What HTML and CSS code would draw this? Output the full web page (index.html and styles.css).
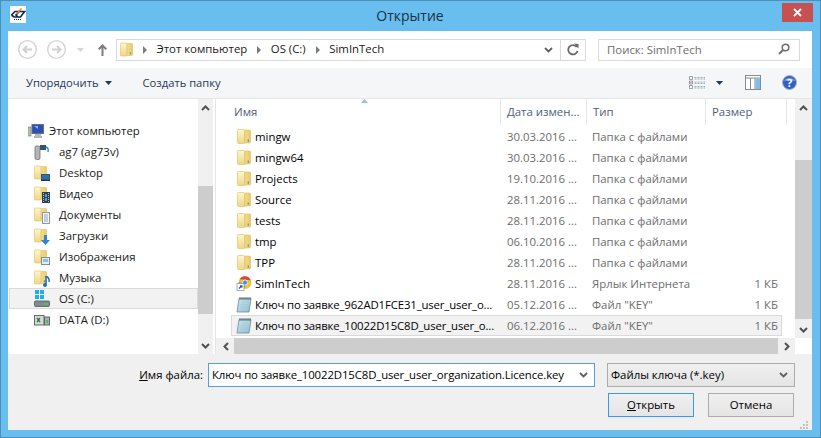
FILE: index.html
```html
<!DOCTYPE html>
<html lang="ru">
<head>
<meta charset="utf-8">
<title>Открытие</title>
<link rel="stylesheet" href="styles.css">
</head>
<body>
<svg class="defs" width="0" height="0" aria-hidden="true">
  <defs>
    <linearGradient id="fy" x1="0" y1="0" x2="0" y2="1"><stop offset="0" stop-color="#fdf6cf"/><stop offset="1" stop-color="#f0d685"/></linearGradient>
    <linearGradient id="fz" x1="0" y1="0" x2="1" y2="0"><stop offset="0" stop-color="#f5dc8c"/><stop offset="1" stop-color="#eac963"/></linearGradient>
    <linearGradient id="nt" x1="0" y1="0" x2="1" y2="1"><stop offset="0" stop-color="#cfe8f1"/><stop offset="1" stop-color="#8dbcd0"/></linearGradient>
    <symbol id="folder" viewBox="0 0 14 15">
      <path d="M0.500 1.500 Q0.500 .5 1.500 .5 H6.500 Q7.500 .5 7.500 1.500 V14.500 H1.500 Q.5 14.500 .5 13.500Z" fill="url(#fy)" stroke="#e0c468" stroke-width=".7"/>
      <path d="M8 1 H12.500 Q13.500 1 13.500 2 V13 Q13.500 14 12.500 14 H8Z" fill="url(#fz)" stroke="#dcbc5c" stroke-width=".6"/>
      <rect x="10.600" y="10.500" width="1.400" height="2.200" fill="#4f9ed8"/>
    </symbol>
    <symbol id="note" viewBox="0 0 16 17">
      <path d="M3 2.500 H15 L13 16 H1Z" fill="url(#nt)" stroke="#6d8d9c" stroke-width=".8"/>
      <path d="M5 6H13M4.600 8.500H12.600M4.300 11H12.300M4 13.500H12" stroke="#a5cbd9" stroke-width=".8"/>
      <path d="M4 1V4M6 1V4M8 1V4M10 1V4M12 1V4M14 1V4" stroke="#56646c" stroke-width=".9"/>
    </symbol>
  </defs>
</svg>
<div class="window">
  <header class="titlebar">
    <div class="title-left">
      <svg class="app-icon" viewBox="0 0 16 17" width="16" height="17">
        <rect width="16" height="17" fill="#fff"/>
        <path d="M1.500 9 L5 5.500 H9 L6 9 L8 11 M7 5.500 H14.500 L10.500 11 H4 L1.500 9" fill="none" stroke="#1b2a52" stroke-width="1.700"/>
        <path d="M6.500 8 L11.500 2.500" stroke="#e98a17" stroke-width="1.500"/>
        <path d="M4 13.500 H11" stroke="#1b2a52" stroke-width="1" stroke-dasharray="1 1"/>
      </svg>
    </div>
    <div class="title-text">Открытие</div>
    <div class="title-right">
      <div class="close">
        <svg viewBox="0 0 9 9" width="9" height="9"><path d="M1 1L8 8M8 1L1 8" stroke="#fff" stroke-width="1.800"/></svg>
      </div>
    </div>
  </header>

  <div class="content">
    <div class="addressrow">
      <svg class="nav-btn" viewBox="0 0 19 19" width="19" height="19"><circle cx="9.500" cy="9.500" r="8.800" fill="#fff" stroke="#d2d2d2" stroke-width="1.300"/><path d="M14 9.500H6M9 6L5.500 9.500L9 13" fill="none" stroke="#d0d0d0" stroke-width="2"/></svg>
      <svg class="nav-btn fwd" viewBox="0 0 19 19" width="19" height="19"><circle cx="9.500" cy="9.500" r="8.800" fill="#fff" stroke="#d2d2d2" stroke-width="1.300"/><path d="M5 9.500H13M10 6L13.500 9.500L10 13" fill="none" stroke="#d0d0d0" stroke-width="2"/></svg>
      <svg class="hist" viewBox="0 0 7 4" width="7" height="4"><path d="M0 0H7L3.500 4Z" fill="#d6d6d6"/></svg>
      <svg class="up" viewBox="0 0 9 12" width="9" height="12"><path d="M4.500 12V1.500M.7 5.300L4.500 1.500L8.300 5.300" fill="none" stroke="#7e7e7e" stroke-width="2"/></svg>
      <div class="addressbar">
        <svg class="crumb-folder" width="13" height="17"><use href="#folder"/></svg>
        <span class="sep"></span><span class="crumb">Этот компьютер</span>
        <span class="sep"></span><span class="crumb">OS (C:)</span>
        <span class="sep"></span><span class="crumb">SimInTech</span>
        <span class="grow"></span>
        <svg class="addr-drop" viewBox="0 0 9 6" width="9" height="6"><path d="M1 1L4.500 4.500L8 1" fill="none" stroke="#5f5f5f" stroke-width="1.800"/></svg>
        <span class="refresh">
          <svg viewBox="0 0 12 13" width="12" height="13"><path d="M9.800 4A4.700 4.700 0 1 0 10.500 8" fill="none" stroke="#6b6b6b" stroke-width="1.800"/><path d="M7 .5L11.500 1V5.500Z" fill="#6b6b6b"/></svg>
        </span>
      </div>
      <div class="searchbox">
        <span class="grow">Поиск: SimInTech</span>
        <svg viewBox="0 0 12 12" width="12" height="12"><circle cx="7.500" cy="4.500" r="3.300" fill="none" stroke="#6f6f6f" stroke-width="1.600"/><path d="M5 7L1 11" stroke="#6f6f6f" stroke-width="2"/></svg>
      </div>
    </div>

    <div class="toolbar">
      <span class="tool">Упорядочить</span>
      <svg class="caret" viewBox="0 0 7 4" width="7" height="4"><path d="M0 0H7L3.500 4Z" fill="#1e395b"/></svg>
      <span class="tool create">Создать папку</span>
      <span class="grow"></span>
      <svg class="view-ic" viewBox="0 0 16 13" width="16" height="13">
        <path d="M.5 .5h3v3h-3zM.5 5h3v3h-3zM.5 9.500h3v3h-3z" fill="#fff" stroke="#7d8a9a" stroke-width=".8"/>
        <rect x="1.500" y="5.800" width="1" height="1.500" fill="#d84a3a"/>
        <path d="M5.500 1.500H16M5.500 3H16M5.500 6H16M5.500 7.500H16M5.500 10.500H16M5.500 12H16" stroke="#8b97a6" stroke-width=".8" stroke-dasharray="2 1"/>
      </svg>
      <svg class="view-caret" viewBox="0 0 7 4" width="7" height="4"><path d="M0 0H7L3.500 4Z" fill="#1e395b"/></svg>
      <svg class="pane-ic" viewBox="0 0 16 15" width="16" height="15">
        <rect x=".5" y=".5" width="15" height="14" fill="#fff" stroke="#8a8a8a"/>
        <path d="M.5 3H15.500M5.500 3V14.500M10 3V14.500" stroke="#8a8a8a"/>
        <rect x="10.500" y="3.500" width="4.500" height="10.500" fill="#7dbdf2"/>
      </svg>
      <svg class="help-ic" viewBox="0 0 15 15" width="15" height="15">
        <circle cx="7.500" cy="7.500" r="7" fill="#2f62c0" stroke="#a9b3c4"/>
        <path d="M2 6A6 5 0 0 1 13 6Q7.500 4.500 2 6Z" fill="#7ea7e8"/>
        <text class="help-q" x="7.500" y="11.500" text-anchor="middle">?</text>
      </svg>
    </div>

    <div class="panes">
      <nav class="navpane">
        <div class="navlist">
          <div class="nav-item top">
            <svg class="ni" viewBox="0 0 16 14" width="16" height="14"><rect x="0" y="3" width="3" height="9" fill="#b9c3b4" stroke="#6f7a6f" stroke-width=".6"/><rect x="4" y="0.500" width="11.500" height="9" fill="#2b4fb8" stroke="#6b6f7b"/><path d="M6 2H10V5Z" fill="#8fb0ee"/><path d="M7 11H13M6 13H14" stroke="#9aa0a6" stroke-width="1.400"/></svg>
            <span>Этот компьютер</span>
          </div>
          <div class="nav-item">
            <svg class="ni" viewBox="0 0 16 16" width="16" height="16"><rect x="1" y="2" width="5" height="13.500" rx="1.500" fill="#b5b5b5" stroke="#6f6f6f" stroke-width=".8"/><rect x="6" y="1" width="6" height="5" fill="#32566f"/><path d="M12 3Q15 4 14 8" fill="none" stroke="#2b8ad8" stroke-width="1.400"/></svg>
            <span>ag7 (ag73v)</span>
          </div>
          <div class="nav-item">
            <span class="ni-wrap"><svg width="13" height="15"><use href="#folder"/></svg><svg class="ov" viewBox="0 0 9 7" width="9" height="7"><rect width="9" height="6" fill="#2f6fa8" stroke="#24384d" stroke-width=".7"/><rect y="6" width="9" height="1" fill="#24384d"/></svg></span>
            <span>Desktop</span>
          </div>
          <div class="nav-item">
            <span class="ni-wrap"><svg width="13" height="15"><use href="#folder"/></svg><svg class="ov tall" viewBox="0 0 8 11" width="8" height="11"><rect width="8" height="11" fill="#2a3f4f"/><path d="M1.500 1v9M6.500 1v9" stroke="#a9c7da" stroke-dasharray="1 1"/><rect x="3" y="2" width="2" height="3" fill="#5aa0d2"/><rect x="3" y="6" width="2" height="3" fill="#5aa0d2"/></svg></span>
            <span>Видео</span>
          </div>
          <div class="nav-item">
            <span class="ni-wrap"><svg width="13" height="15"><use href="#folder"/></svg><svg class="ov tall" viewBox="0 0 8 12" width="8" height="12"><rect x=".5" y=".5" width="7" height="11" fill="#f4f6f8" stroke="#8d98a3"/><path d="M2 3H6M2 5H6M2 7H6M2 9H6" stroke="#7d93a8" stroke-width=".8"/></svg></span>
            <span>Документы</span>
          </div>
          <div class="nav-item">
            <span class="ni-wrap"><svg width="13" height="15"><use href="#folder"/></svg><svg class="ov tall" viewBox="0 0 9 10" width="9" height="10"><path d="M3 0H6V5H9L4.500 10L0 5H3Z" fill="#2f86d8"/></svg></span>
            <span>Загрузки</span>
          </div>
          <div class="nav-item">
            <span class="ni-wrap"><svg width="13" height="15"><use href="#folder"/></svg><svg class="ov" viewBox="0 0 9 8" width="9" height="8"><rect x=".5" y=".5" width="8" height="7" fill="#dfeef2" stroke="#7b8f98"/><rect x="2" y="2" width="5" height="3" fill="#8fc2d8"/></svg></span>
            <span>Изображения</span>
          </div>
          <div class="nav-item">
            <span class="ni-wrap"><svg width="13" height="15"><use href="#folder"/></svg><svg class="ov tall" viewBox="0 0 7 11" width="7" height="11"><path d="M3 0V8.500" stroke="#1f6fc0" stroke-width="1.500"/><circle cx="2" cy="9" r="2" fill="#1f6fc0"/><path d="M3 0Q7 2 6 6" fill="none" stroke="#1f6fc0" stroke-width="1.500"/></svg></span>
            <span>Музыка</span>
          </div>
          <div class="nav-item selected">
            <svg class="ni drive" viewBox="0 0 16 17" width="16" height="17"><path d="M1 0h4v4H1zM6 0h4v4H6zM1 5h4v4H1zM6 5h4v4H6z" fill="#1faef0"/><rect x=".5" y="11" width="15" height="5.500" rx="1" fill="#7f8c8f" stroke="#4e585c" stroke-width=".8"/><rect x="10" y="13" width="4" height="2" fill="#4fbf4f"/></svg>
            <span>OS (C:)</span>
          </div>
          <div class="nav-item">
            <svg class="ni drive" viewBox="0 0 16 12" width="16" height="12"><rect x=".5" y="1.500" width="9.500" height="9.500" fill="#d4dadb" stroke="#636b6e"/><path d="M3 4L6 8M6 4L3 8" stroke="#397a3c" stroke-width="1.400"/><rect x="10.500" y="3" width="5" height="8" fill="#aab2b5" stroke="#5d6669"/><rect x="12" y="6" width="2" height="3" fill="#4fbf4f"/></svg>
            <span>DATA (D:)</span>
          </div>
          <div class="nav-item top network">
            <svg class="ni" viewBox="0 0 16 14" width="16" height="14"><circle cx="8" cy="4" r="3" fill="#5b9bd8"/></svg>
          </div>
        </div>
        <div class="vscroll">
          <div class="sb-btn"><svg viewBox="0 0 9 6" width="9" height="6"><path d="M1 5L4.500 1.500L8 5" fill="none" stroke="#505050" stroke-width="2"/></svg></div>
          <div class="sb-track nav-track"><div class="sb-thumb"></div></div>
          <div class="sb-btn"><svg viewBox="0 0 9 6" width="9" height="6"><path d="M1 1L4.500 4.500L8 1" fill="none" stroke="#505050" stroke-width="2"/></svg></div>
        </div>
      </nav>

      <div class="splitter"></div>

      <section class="filepane">
        <div class="filemain">
          <div class="headers">
            <div class="hcol h-name">Имя
              <svg class="sortmark" viewBox="0 0 7 4" width="7" height="4"><path d="M0 4L3.500 0L7 4Z" fill="#9fc0d8"/></svg>
            </div>
            <div class="hcol h-date">Дата измен...</div>
            <div class="hcol h-type">Тип</div>
            <div class="hcol h-size">Размер</div>
          </div>
          <div class="rows">
            <div class="row"><svg class="ri" width="13" height="15"><use href="#folder"/></svg><span class="c-name">mingw</span><span class="c-date">30.03.2016 ...</span><span class="c-type">Папка с файлами</span><span class="c-size"></span></div>
            <div class="row"><svg class="ri" width="13" height="15"><use href="#folder"/></svg><span class="c-name">mingw64</span><span class="c-date">30.03.2016 ...</span><span class="c-type">Папка с файлами</span><span class="c-size"></span></div>
            <div class="row"><svg class="ri" width="13" height="15"><use href="#folder"/></svg><span class="c-name">Projects</span><span class="c-date">19.10.2016 ...</span><span class="c-type">Папка с файлами</span><span class="c-size"></span></div>
            <div class="row"><svg class="ri" width="13" height="15"><use href="#folder"/></svg><span class="c-name">Source</span><span class="c-date">28.11.2016 ...</span><span class="c-type">Папка с файлами</span><span class="c-size"></span></div>
            <div class="row"><svg class="ri" width="13" height="15"><use href="#folder"/></svg><span class="c-name">tests</span><span class="c-date">28.11.2016 ...</span><span class="c-type">Папка с файлами</span><span class="c-size"></span></div>
            <div class="row"><svg class="ri" width="13" height="15"><use href="#folder"/></svg><span class="c-name">tmp</span><span class="c-date">06.10.2016 ...</span><span class="c-type">Папка с файлами</span><span class="c-size"></span></div>
            <div class="row"><svg class="ri" width="13" height="15"><use href="#folder"/></svg><span class="c-name">TPP</span><span class="c-date">28.11.2016 ...</span><span class="c-type">Папка с файлами</span><span class="c-size"></span></div>
            <div class="row">
              <svg class="ri" viewBox="0 0 15 15" width="15" height="15"><circle cx="8.500" cy="6.500" r="6.300" fill="#e8b93a"/><path d="M3 3A6.300 6.300 0 0 1 14 4H8.500Z" fill="#d9473c"/><path d="M14.500 5A6.300 6.300 0 0 1 8 12.800L11 7Z" fill="#f1c63a"/><path d="M2.300 6A6.300 6.300 0 0 0 7 12.600L9 9Z" fill="#4aa352"/><circle cx="8.500" cy="6.500" r="2.600" fill="#4b8fe0" stroke="#fff" stroke-width=".8"/><rect x=".5" y="7.500" width="7" height="7" fill="#fff" stroke="#8a8a8a" stroke-width=".7"/><path d="M2.500 12.500L5 10M3.500 9.800H5.400V11.800" fill="none" stroke="#1c4fb0" stroke-width="1.100"/></svg>
              <span class="c-name">SimInTech</span><span class="c-date">28.11.2016 ...</span><span class="c-type">Ярлык Интернета</span><span class="c-size">1 КБ</span>
            </div>
            <div class="row"><svg class="ri" width="16" height="17"><use href="#note"/></svg><span class="c-name long">Ключ по заявке_962AD1FCE31_user_user_o...</span><span class="c-date">05.12.2016 ...</span><span class="c-type">Файл "KEY"</span><span class="c-size">1 КБ</span></div>
            <div class="row selected"><svg class="ri" width="16" height="17"><use href="#note"/></svg><span class="c-name long">Ключ по заявке_10022D15C8D_user_user_o...</span><span class="c-date">06.12.2016 ...</span><span class="c-type">Файл "KEY"</span><span class="c-size">1 КБ</span></div>
          </div>
          <div class="hscroll">
            <div class="hb-btn"><svg viewBox="0 0 6 9" width="6" height="9"><path d="M5 1L1.500 4.500L5 8" fill="none" stroke="#505050" stroke-width="2"/></svg></div>
            <div class="hb-thumb"></div>
            <div class="hb-btn end"><svg viewBox="0 0 6 9" width="6" height="9"><path d="M1 1L4.500 4.500L1 8" fill="none" stroke="#505050" stroke-width="2"/></svg></div>
          </div>
        </div>
        <div class="vscroll file-v">
          <div class="sb-btn"><svg viewBox="0 0 9 6" width="9" height="6"><path d="M1 5L4.500 1.500L8 5" fill="none" stroke="#505050" stroke-width="2"/></svg></div>
          <div class="sb-track file-track"><div class="sb-thumb"></div></div>
          <div class="sb-btn"><svg viewBox="0 0 9 6" width="9" height="6"><path d="M1 1L4.500 4.500L8 1" fill="none" stroke="#505050" stroke-width="2"/></svg></div>
          <div class="corner"></div>
        </div>
      </section>
    </div>

    <footer class="bottom">
      <div class="file-line">
        <label class="fname-label"><u>И</u>мя файла:</label>
        <div class="fname-input">
          <span class="grow">Ключ по заявке_10022D15C8D_user_user_organization.Licence.key</span>
          <svg viewBox="0 0 9 6" width="9" height="6"><path d="M1 1L4.500 4.500L8 1" fill="none" stroke="#5f5f5f" stroke-width="1.800"/></svg>
        </div>
        <div class="filter">
          <span class="grow">Файлы ключа (*.key)</span>
          <svg viewBox="0 0 9 6" width="9" height="6"><path d="M1 1L4.500 4.500L8 1" fill="none" stroke="#5f5f5f" stroke-width="1.800"/></svg>
        </div>
      </div>
      <div class="btn-line">
        <div class="btn primary"><span><u>О</u>ткрыть</span></div>
        <div class="btn">Отмена</div>
      </div>
      <svg class="grip" viewBox="0 0 9 9" width="9" height="9"><path d="M6 0h2v2H6zM3 3h2v2H3zM6 3h2v2H6zM0 6h2v2H0zM3 6h2v2H3zM6 6h2v2H6z" fill="#c4c4c4"/></svg>
    </footer>
  </div>
</div>
</body>
</html>
```
FILE: styles.css
```css
* { box-sizing: border-box; }
html, body { margin: 0; padding: 0; }
body { width: 821px; height: 438px; overflow: hidden; font-family: "Open Sans", "Noto Sans", sans-serif; font-size: 11.4px; color: #000; }
.defs { position: absolute; }
svg { display: block; flex: none; }
.grow { flex: 1 1 auto; min-width: 0; }

.window { width: 821px; height: 438px; background: #69bef0; border: 1px solid #4d8fb8; display: flex; flex-direction: column; padding: 0 8px 7px 7px; }

.titlebar { height: 30px; flex: none; display: grid; grid-template-columns: 1fr auto 1fr; align-items: start; }
.title-left { padding: 5px 0 0 2px; }
.title-text { font-size: 14px; line-height: 20px; padding-top: 5px; color: #1d2f40; }
.title-right { display: flex; justify-content: flex-end; }
.close { width: 31px; height: 19px; margin-top: 2px; margin-right: -1px; background: #c75050; display: flex; align-items: center; justify-content: center; }

.content { flex: 1 1 auto; min-height: 0; background: #fff; display: flex; flex-direction: column; }

.addressrow { height: 37px; flex: none; display: flex; align-items: center; padding-left: 10px; background: #fff; }
.nav-btn.fwd { margin-left: 10px; }
.hist { margin-left: 11px; }
.up { margin-left: 14px; }
.addressbar { width: 470px; height: 22px; margin-left: 9px; border: 1px solid #d9d9d9; display: flex; align-items: center; padding-left: 3px; color: #1a1a1a; }
.crumb { position: relative; top: -1px; }
.sep { width: 0; height: 0; border-left: 4px solid #7a7a7a; border-top: 4px solid transparent; border-bottom: 4px solid transparent; margin: 0 9.5px 0 10px; }
.addr-drop { margin-right: 7px; }
.refresh { width: 25px; height: 20px; border-left: 1px solid #d9d9d9; display: flex; align-items: center; justify-content: center; }
.searchbox { width: 202px; height: 22px; margin-left: 12px; border: 1px solid #d9d9d9; display: flex; align-items: center; padding: 0 9px 1px 8px; color: #6d6d6d; }

.toolbar { height: 31px; flex: none; background: #f5f6f7; border-bottom: 1px solid #e5e5e5; display: flex; align-items: center; padding: 0 15px 1px 18px; color: #1e395b; font-size: 11.2px; }
.caret { margin-left: 6px; }
.create { margin-left: 31px; }
.view-caret { margin-left: 11px; }
.pane-ic { margin-left: 22px; }
.help-ic { margin-left: 21px; }
.help-q { font-size: 11px; font-weight: 700; fill: #fff; }

.panes { height: 255px; flex: none; display: flex; background: #fff; }

.navpane { width: 205px; flex: none; display: flex; overflow: hidden; }
.navlist { width: 190px; padding: 21px 0 0 1px; overflow: hidden; }
.nav-item { height: 21px; display: flex; align-items: center; padding-left: 25px; white-space: nowrap; color: #1a1a1a; }
.nav-item .ni, .nav-item .ni-wrap { margin-right: 9px; }
.nav-item .ni { width: 16px; }
.nav-item.top { padding-left: 19px; }
.nav-item.top .ni { margin-right: 5px; }
.nav-item.selected { background: #f2f2f2; border: 1px solid #dadada; padding-left: 24px; }
.ni-wrap { position: relative; width: 16px; height: 16px; display: block; }
.ov { position: absolute; right: 0; bottom: 0; }
.ov.tall { bottom: -1px; }
.nav-item.network { margin-top: 23px; }

.vscroll { width: 15px; flex: none; background: #f0f0f0; display: flex; flex-direction: column; }
.sb-btn { height: 17px; flex: none; display: flex; align-items: center; justify-content: center; }
.sb-track { flex: 1 1 auto; position: relative; display: flex; flex-direction: column; }
.sb-thumb { background: #cdcdcd; }
.nav-track { padding-top: 70px; padding-bottom: 23px; }
.nav-track .sb-thumb { flex: 1 1 auto; }
.file-track { padding-top: 44px; padding-bottom: 2px; }
.file-track .sb-thumb { flex: 1 1 auto; }

.splitter { width: 3px; flex: none; border-right: 1px solid #e5e5e5; }

.filepane { flex: 1 1 auto; min-width: 0; display: flex; }
.filemain { width: 579px; flex: none; display: flex; flex-direction: column; }
.headers { height: 27px; flex: none; display: flex; color: #4c607a; }
.hcol { height: 26px; line-height: 26px; padding-left: 6px; border-right: 1px solid #e5e5e5; position: relative; white-space: nowrap; }
.h-name { width: 285px; padding-left: 18px; }
.h-date { width: 86px; }
.h-type { width: 119px; }
.h-size { width: 81px; }
.sortmark { position: absolute; left: 145px; top: 0; }

.rows { flex: 1 1 auto; min-height: 0; padding: 0 0 0 15px; }
.row { height: 21px; width: 551px; display: flex; align-items: center; white-space: nowrap; padding-left: 5px; color: #6d6d6d; }
.ri { width: 16px; margin-right: 3px; }
.c-name { width: 252px; color: #000; }
.c-name.long { letter-spacing: -0.15px; }
.c-date { width: 85px; }
.c-type { width: 140px; }
.c-size { width: 46px; text-align: right; }
.row.selected { background: #f2f2f2; border: 1px solid #dadada; padding-left: 4px; }

.hscroll { height: 16px; flex: none; background: #f0f0f0; display: flex; padding-left: 1px; }
.hb-btn { width: 17px; flex: none; display: flex; align-items: center; justify-content: center; }
.hb-thumb { flex: 1 1 auto; background: #cdcdcd; }
.file-v { width: 17px; }
.file-v .corner { height: 16px; flex: none; background: #fff; }

.bottom { flex: 1 1 auto; background: #f0f0f0; position: relative; padding: 9px 0 0; }
.file-line { height: 24px; display: flex; align-items: center; }
.fname-label { width: 195px; padding-bottom: 2px; text-align: right; color: #000; }
.fname-input { width: 387px; height: 24px; margin-left: 5px; background: #fff; border: 1px solid #569de5; display: flex; align-items: center; padding: 0 6px 1px 3px; white-space: nowrap; letter-spacing: -0.12px; }
.filter { width: 188px; height: 24px; margin-left: 12px; background: linear-gradient(#f0f0f0, #e5e5e5); border: 1px solid #acacac; display: flex; align-items: center; padding: 0 6px 1px 3px; }
.btn-line { display: flex; padding-left: 600px; margin-top: 6px; }
.btn { width: 86px; height: 24px; background: linear-gradient(#f0f0f0, #e5e5e5); border: 1px solid #acacac; display: flex; align-items: center; justify-content: center; padding-bottom: 1px; margin-right: 14px; }
.btn.primary { border-color: #3399ff; }
.grip { position: absolute; right: 3px; bottom: 0; }
```
